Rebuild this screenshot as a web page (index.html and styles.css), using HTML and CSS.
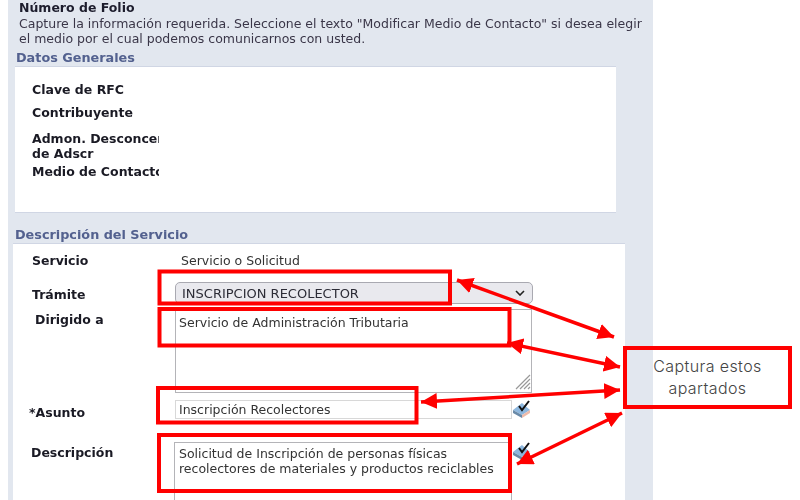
FILE: index.html
```html
<!DOCTYPE html>
<html lang="es">
<head>
  <meta charset="UTF-8">
  <title>Número de Folio</title>
  <link rel="stylesheet" href="styles.css">
</head>
<body>
  <div class="panel">
    <h1>Número de Folio</h1>
    <p class="intro">Capture la información requerida. Seleccione el texto "Modificar Medio de Contacto" si desea elegir<br>el medio por el cual podemos comunicarnos con usted.</p>

    <h2>Datos Generales</h2>
    <section class="card card-datos">
      <div class="dato dato-rfc">Clave de RFC</div>
      <div class="dato dato-contrib">Contribuyente</div>
      <div class="dato dato-admon">Admon. Desconcentrada<br>de Adscr</div>
      <div class="dato">Medio de Contacto</div>
    </section>

    <h2 class="h-servicio">Descripción del Servicio</h2>
    <section class="card card-servicio">
      <div class="row row-servicio">
        <label>Servicio</label>
        <span class="value">Servicio o Solicitud</span>
      </div>
      <div class="row row-tramite">
        <label>Trámite</label>
        <div class="select">
          <span>INSCRIPCION RECOLECTOR</span>
          <svg width="10" height="6" viewBox="0 0 10 6"><path d="M1 1l4 4 4-4" fill="none" stroke="#222" stroke-width="1.6"/></svg>
        </div>
      </div>
      <div class="row row-dirigido">
        <label>Dirigido a</label>
        <div class="area area-dirigido">
          Servicio de Administración Tributaria
          <svg class="grip" width="16" height="16" viewBox="0 0 16 16"><path d="M1 15L15 1M5 15L15 5M9 15l6-6M13 15l2-2" stroke="#999" stroke-width="1.2"/></svg>
        </div>
      </div>
      <div class="row row-asunto">
        <label>*Asunto</label>
        <div class="input">Inscripción Recolectores</div>
        <svg class="book" width="18" height="18" viewBox="0 0 18 18"><use href="#book"/></svg>
      </div>
      <div class="row row-descripcion">
        <label>Descripción</label>
        <div class="area area-descripcion">Solicitud de Inscripción de personas físicas<br>recolectores de materiales y productos reciclables</div>
        <svg class="book" width="18" height="18" viewBox="0 0 18 18"><use href="#book"/></svg>
      </div>
    </section>
  </div>

  <div class="callout">Captura estos<br>apartados</div>

  <!-- red marks drawn over the form -->
  <svg class="marks" width="800" height="500" viewBox="0 0 800 500">
    <defs>
      <marker id="head" markerUnits="userSpaceOnUse" markerWidth="17" markerHeight="16" refX="16" refY="8" orient="auto-start-reverse">
        <path d="M0 0L16 8L0 16z" fill="#f00"/>
      </marker>
      <g id="book">
        <path d="M0 10L9 3l8 7-8 5z" fill="#8db7de"/>
        <path d="M0 10v3l9 5v-3z" fill="#6a8aa8"/>
        <path d="M9 15v3l8-5v-3z" fill="#eebbaa"/>
        <path d="M6 6l3 4 7-9" fill="none" stroke="#111" stroke-width="2"/>
      </g>
    </defs>
    <g class="boxes">
      <rect x="159.5" y="271.5" width="290.500" height="32"/>
      <rect x="159.500" y="309" width="350" height="36.500"/>
      <rect x="158" y="388" width="258.500" height="34.500"/>
      <rect x="159" y="435" width="351" height="56"/>
    </g>
    <g class="arrows">
      <line x1="457" y1="280" x2="614" y2="337" marker-start="url(#head)" marker-end="url(#head)"/>
      <line x1="507" y1="343" x2="620" y2="367" marker-start="url(#head)" marker-end="url(#head)"/>
      <line x1="421" y1="402" x2="620" y2="390" marker-start="url(#head)" marker-end="url(#head)"/>
      <line x1="517" y1="464" x2="622" y2="413" marker-start="url(#head)" marker-end="url(#head)"/>
    </g>
  </svg>
</body>
</html>
```

FILE: styles.css
```css
* {
  box-sizing: border-box;
}

html, body {
  margin: 0;
  height: 500px;
  overflow: hidden;
  background: #fff;
}

body {
  position: relative;
  font-family: "DejaVu Sans", Verdana, sans-serif;
  font-size: 12.500px;
  color: #333;
}

.panel {
  width: 645px;
  height: 500px;
  margin-left: 8px;
  padding: 0 0 0 5px;
  background: #e2e7ef;
  overflow: hidden;
  filter: blur(0.35px);
}

h1 {
  margin: 0 0 0 6px;
  font-size: 12.500px;
  line-height: 15px;
  color: #1c1c2c;
}

.intro {
  margin: 2px 0 0 6px;
  line-height: 14.500px;
  color: #3a3648;
  white-space: nowrap;
}

h2 {
  margin: 3px 0 0 3px;
  font-size: 12.800px;
  line-height: 17px;
  color: #53618f;
}

.h-servicio {
  margin: 13px 0 0 2px;
}

.card {
  background: #fff;
  border-top: 1px solid #d0d6e4;
}

.card-datos {
  width: 601px;
  height: 147px;
  margin: 0 0 0 2px;
  padding: 15px 0 0 17px;
  border-bottom: 1px solid #d0d6e4;
}

.dato {
  width: 127px;
  overflow: hidden;
  white-space: nowrap;
  font-weight: bold;
  line-height: 15px;
  color: #1a1a24;
}

.dato-rfc {
  margin-bottom: 8px;
}

.dato-contrib {
  margin-bottom: 11px;
}

.dato-admon {
  margin-bottom: 3px;
}

.card-servicio {
  width: 612px;
  height: 260px;
}

.row {
  display: grid;
  grid-template-columns: 162px auto auto;
  justify-content: start;
}

.row label {
  font-weight: bold;
  line-height: 15px;
  color: #1a1a24;
}

.value {
  margin-left: 6px;
}

.row-servicio {
  padding-top: 9px;
  height: 38px;
}

.row-servicio label {
  padding-left: 19px;
}

.row-tramite label {
  padding: 5px 0 0 19px;
}

.row-dirigido {
  margin-top: 5px;
}

.row-dirigido label {
  padding: 3px 0 0 22px;
}

.row-asunto {
  margin-top: 7px;
}

.row-asunto label {
  padding: 5px 0 0 16px;
}

.row-descripcion {
  margin-top: 22px;
}

.row-descripcion label {
  padding: 3px 0 0 18px;
}

.select {
  display: flex;
  justify-content: space-between;
  align-items: center;
  width: 358px;
  height: 22px;
  padding: 0 7px 0 6px;
  border: 1px solid #a9a9b1;
  border-radius: 5px;
  background: #e9e9ee;
  font-size: 13px;
  color: #2c2c36;
}

.area, .input {
  position: relative;
  padding: 2px 3px;
  border: 1px solid #b4b4b8;
  line-height: 15px;
  color: #333;
}

.area-dirigido {
  width: 357px;
  height: 84px;
  padding: 5px 3px;
}

.grip {
  position: absolute;
  right: 0;
  bottom: 2px;
}

.input {
  width: 337px;
  height: 19px;
  padding: 1px 3px;
  border-color: #d8d8d8;
}

.area-descripcion {
  width: 338px;
  height: 70px;
  margin-left: -1px;
  padding: 4px 4px;
  line-height: 14.500px;
}

.book {
  margin-left: 1px;
}

.callout {
  position: absolute;
  left: 623px;
  top: 346px;
  width: 169px;
  height: 63px;
  padding-top: 6px;
  border: 4px solid #f00;
  font-family: Inter, "Open Sans", sans-serif;
  font-size: 16px;
  font-weight: 300;
  letter-spacing: 0.4px;
  line-height: 21.500px;
  text-align: center;
  color: #444;
}

.marks {
  position: absolute;
  left: 0;
  top: 0;
}

.boxes rect {
  fill: none;
  stroke: #f00;
  stroke-width: 4;
}

.arrows line {
  stroke: #f00;
  stroke-width: 3.500;
}
```
